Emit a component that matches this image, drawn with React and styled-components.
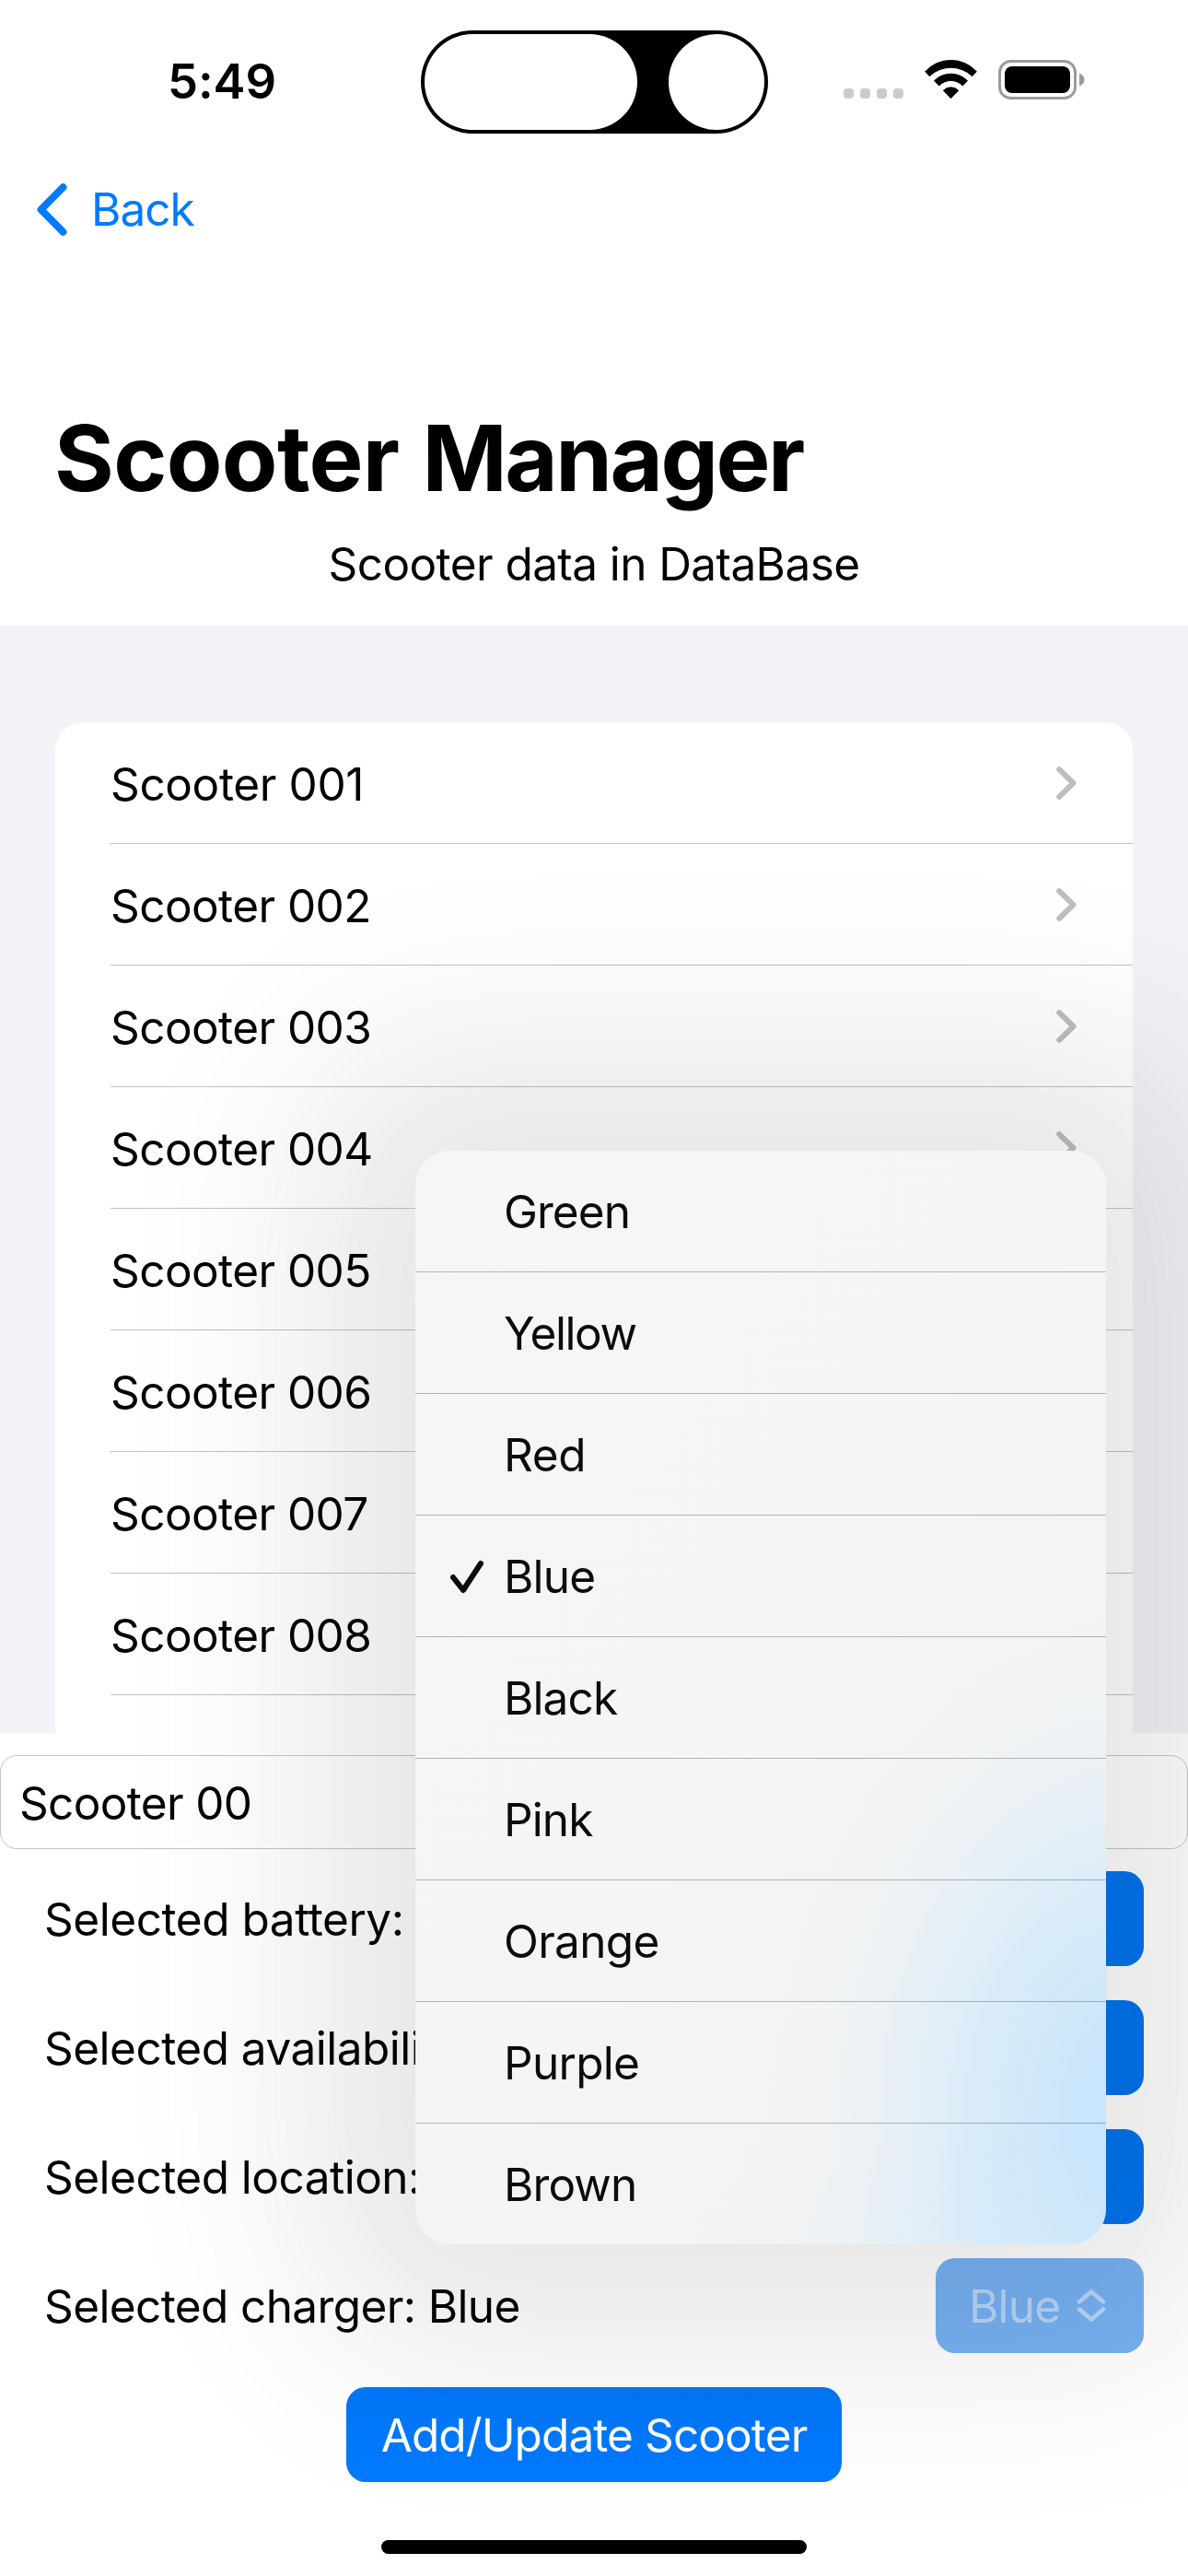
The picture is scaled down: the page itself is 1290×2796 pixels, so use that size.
import React from 'react';
import styled, { createGlobalStyle, css } from 'styled-components';

const GlobalStyle = createGlobalStyle`
  *, *::before, *::after { box-sizing: border-box; }
  body {
    margin: 0;
    background: #fff;
    color: #000;
    font-family: Inter, "Liberation Sans", sans-serif;
    -webkit-font-smoothing: antialiased;
  }
`;

const Screen = styled.div`
  position: relative;
  display: flex;
  flex-direction: column;
  width: 1290px;
  height: 2796px;
  overflow: hidden;
  background: #fff;
`;

const Label = styled.span`
  font-size: 49.5px;
  line-height: 60px;
  white-space: nowrap;
  letter-spacing: ${(p) => p.$track ?? -0.0117}em;
`;

/* ---------- status bar ---------- */

const StatusBar = styled.header`
  display: grid;
  grid-template-columns: 457px 377px 1fr;
  align-items: center;
  height: 178px;
`;

const Clock = styled.time`
  padding: 0 0 2px 182px;
  font-size: 52.5px;
  font-weight: 600;
  line-height: 64px;
  letter-spacing: -0.002em;
`;

const Island = styled.div`
  display: flex;
  justify-content: space-between;
  height: 112px;
  padding: 4px;
  border-radius: 56px;
  background: #000;
`;

const IslandPill = styled.span`
  width: ${(p) => p.$width}px;
  border-radius: 52px;
  background: #fff;
`;

const Indicators = styled.div`
  display: flex;
  align-items: flex-end;
  height: 43px;
  margin-top: -5px;
  padding-left: 82px;
`;

const Signal = styled.div`
  display: flex;
  gap: 7px;
  margin: 0 23px 1px 0;
`;

const Dot = styled.i`
  width: 11px;
  height: 11px;
  border-radius: 4px;
  background: #cbcbcb;
`;

const WifiSvg = styled.svg`
  width: 57px;
  height: 42.3px;
  margin: 0 23px 1px 0;
`;

const BatterySvg = styled.svg`
  width: 94px;
  height: 43px;
`;

const Wifi = () => (
  <WifiSvg viewBox="312 75 171 127">
    <g fill="#000" stroke="#000" strokeWidth="3" strokeLinejoin="round">
      <path d="M314 113A113 113 0 0 1 481 113L467 128A100 100 0 0 0 328 128Z" />
      <path d="M343.500 143A76 76 0 0 1 451.500 143L436 159A53 53 0 0 0 359 159Z" />
      <path d="M373 175A34 34 0 0 1 422 175L397.500 200Z" />
    </g>
  </WifiSvg>
);

const Battery = () => (
  <BatterySvg viewBox="0 0 94 43">
    <rect x="1.500" y="1.500" width="82" height="40" rx="12" fill="none" stroke="#9b9b9b" strokeWidth="3" />
    <rect x="7" y="7" width="71" height="29" rx="8" fill="#000" />
    <path d="M88 14.500C91.500 16 93.500 18.500 93.500 21.500S91.500 27 88 28.500Z" fill="#9b9b9b" />
  </BatterySvg>
);

/* ---------- navigation and heading ---------- */

const NavBar = styled.nav`
  display: flex;
  align-items: center;
  height: 98px;
  padding-left: 40px;
`;

const BackButton = styled.button`
  display: flex;
  align-items: center;
  gap: 26px;
  padding: 0;
  border: 0;
  background: none;
  color: #007aff;
  font: inherit;
`;

const BackChevron = styled.svg`
  width: 33px;
  height: 57px;
  fill: none;
  stroke: #007aff;
  stroke-width: 8;
  stroke-linecap: round;
  stroke-linejoin: round;
`;

const Heading = styled.div`
  display: flex;
  flex-direction: column;
  height: 403px;
  padding-top: 161px;
`;

const Title = styled.h1`
  margin: 0;
  padding-left: 59px;
  font-size: 99px;
  font-weight: 700;
  line-height: 120px;
  letter-spacing: -0.025em;
  word-spacing: 4px;
`;

const TitleLead = styled.span`
  letter-spacing: -0.0066em;
`;

const Subtitle = styled.p`
  margin: 25px 0 0;
  text-align: center;
  line-height: 60px;
`;

/* ---------- scooter list ---------- */

const ListArea = styled.section`
  height: 1202px;
  padding: 105px 60px 0;
  overflow: hidden;
  background: #f2f2f7;
`;

const Card = styled.ul`
  height: 1200px;
  margin: 0;
  padding: 0 0 0 60px;
  border-radius: 30px;
  background: #fff;
  list-style: none;
`;

const ScooterRow = styled.li`
  display: flex;
  align-items: center;
  justify-content: space-between;
  height: 132px;
  padding: 2px 61px 0 0;
  border-bottom: 1px solid #c2c2c4;
`;

const RowChevron = styled.svg`
  width: 22px;
  height: 36px;
  margin-top: -1px;
  fill: none;
  stroke: #bebebf;
  stroke-width: 6;
  stroke-linecap: round;
  stroke-linejoin: round;
`;

/* ---------- form ---------- */

const Form = styled.form`
  display: flex;
  flex-direction: column;
  align-items: center;
  padding-top: 24px;
`;

const NameField = styled.div`
  display: flex;
  align-items: center;
  width: 100%;
  height: 102px;
  margin-bottom: 24px;
  padding: 1px 20px 0;
  border: 1px solid #c4c4c4;
  border-radius: 18px;
`;

const PickerRow = styled.div`
  display: flex;
  align-items: center;
  justify-content: space-between;
  width: 100%;
  height: 103px;
  margin-bottom: 37px;
  padding: 0 48px 0 48px;
`;

const button = css`
  display: flex;
  align-items: center;
  height: 103px;
  border: 0;
  border-radius: 21px;
  font: inherit;
  color: #fff;
`;

const PickerButton = styled.button`
  ${button}
  gap: 18px;
  width: 226px;
  padding: 0 0 0 36px;
  background: #0074ee;
  ${(p) => p.$open && css`
    color: #b8d6f8;
    background: #77b1f3;
  `}
`;

const UpDown = styled.svg`
  width: 32px;
  height: 37px;
  fill: none;
  stroke: currentColor;
  stroke-width: 4.8;
  stroke-linecap: round;
  stroke-linejoin: round;
`;

const SubmitButton = styled.button`
  ${button}
  justify-content: center;
  width: 538px;
  padding: 0;
  background: linear-gradient(#0077f8, #007aff);
`;

const HomeIndicator = styled.div`
  width: 462px;
  height: 15px;
  margin: 63px auto 0;
  border-radius: 8px;
  background: #000;
`;

/* ---------- colour menu ---------- */

const Menu = styled.ul`
  position: absolute;
  top: 1249px;
  left: 451px;
  width: 750px;
  height: 1187px;
  margin: 0;
  padding: 0;
  overflow: hidden;
  border-radius: 38px;
  list-style: none;
  color: #0b0b0b;
  background:
    radial-gradient(ellipse 330px 190px at 690px 1230px, rgba(200, 229, 253, 0.35), rgba(200, 229, 253, 0) 100%),
    radial-gradient(
      ellipse 412px 560px at 780px 1045px,
      #c8e5fd 0%,
      #cbe6fb 18%,
      #d6eaf8 36%,
      #deedf8 49%,
      #e8f0f6 62%,
      #eff2f4 76%,
      rgba(243, 243, 243, 0) 100%
    ),
    linear-gradient(125deg, #f6f6f6, #f5f5f5 45%, #f3f3f3 75%);
`;

const MenuShadow = styled.div`
  position: absolute;
  top: 1249px;
  left: 451px;
  width: 750px;
  height: 1187px;
  border-radius: 38px;
  box-shadow: 0 0 218px 110px rgba(10, 10, 0, 0.103);
`;

const MenuItem = styled.li`
  display: grid;
  grid-template-columns: 96px 1fr;
  align-items: center;
  height: 132px;
  background: ${(p) =>
    p.$last
      ? 'none'
      : `linear-gradient(to right, #b3b3b4 60%, ${p.$tint}) bottom / 100% 1px no-repeat`};
`;

const CheckSlot = styled.span`
  display: flex;
  padding-left: 37px;
`;

const CheckSvg = styled.svg`
  width: 38px;
  height: 37px;
  fill: none;
  stroke: #0b0b0b;
  stroke-width: 6;
  stroke-linecap: round;
  stroke-linejoin: round;
`;

const Check = () => (
  <CheckSvg viewBox="0 0 38 37">
    <path d="M4 19L15 33L34 4" />
  </CheckSvg>
);

const scooters = ['001', '002', '003', '004', '005', '006', '007', '008'];

const pickers = [
  { label: 'Selected battery:', track: -0.0091 },
  { label: 'Selected availability:', track: -0.0105 },
  { label: 'Selected location:', track: -0.0105 },
  { label: 'Selected charger: Blue', track: -0.0124, value: 'Blue' },
];

const colours = [
  { name: 'Green', track: -0.019 },
  { name: 'Yellow', track: -0.028 },
  { name: 'Red', track: -0.007 },
  { name: 'Blue', track: -0.0158, checked: true },
  { name: 'Black', track: -0.018 },
  { name: 'Pink', track: -0.018, tint: '#8fb0cc' },
  { name: 'Orange', track: -0.014, tint: '#88b0d0' },
  { name: 'Purple', track: -0.014, tint: '#7fadd4' },
  { name: 'Brown', track: -0.018 },
];

export default function App() {
  return (
    <>
      <GlobalStyle />
      <Screen>
        <StatusBar>
          <Clock>5:49</Clock>
          <Island>
            <IslandPill $width={231} />
            <IslandPill $width={104} />
          </Island>
          <Indicators>
            <Signal>
              <Dot />
              <Dot />
              <Dot />
              <Dot />
            </Signal>
            <Wifi />
            <Battery />
          </Indicators>
        </StatusBar>

        <NavBar>
          <BackButton>
            <BackChevron viewBox="0 0 33 57">
              <path d="M28.500 4.300L4.500 28.500L28.500 52.700" />
            </BackChevron>
            <Label $track={-0.02}>Back</Label>
          </BackButton>
        </NavBar>

        <Heading>
          <Title>
            <TitleLead>Scooter</TitleLead> Manager
          </Title>
          <Subtitle>
            <Label>Scooter data in DataBase</Label>
          </Subtitle>
        </Heading>

        <ListArea>
          <Card>
            {scooters.map((id) => (
              <ScooterRow key={id}>
                <Label $track={id === '001' ? -0.0075 : undefined}>Scooter {id}</Label>
                <RowChevron viewBox="0 0 22 36">
                  <path d="M3.200 3.200L18.500 18L3.200 32.800" />
                </RowChevron>
              </ScooterRow>
            ))}
          </Card>
        </ListArea>

        <Form>
          <NameField>
            <Label $track={-0.0134}>Scooter 00</Label>
          </NameField>
          {pickers.map(({ label, track, value }) => (
            <PickerRow key={label}>
              <Label $track={track}>{label}</Label>
              <PickerButton type="button" $open={Boolean(value)}>
                {value && (
                  <>
                    <Label $track={-0.0158}>{value}</Label>
                    <UpDown viewBox="0 0 32 37">
                      <path d="M3 14.500L16 3.500L29 14.500M3 22.500L16 33.500L29 22.500" />
                    </UpDown>
                  </>
                )}
              </PickerButton>
            </PickerRow>
          ))}
          <SubmitButton type="button">
            <Label $track={-0.0182}>Add/Update Scooter</Label>
          </SubmitButton>
        </Form>
        <HomeIndicator />

        <MenuShadow />
        <Menu>
          {colours.map(({ name, track, checked, tint = '#b3b3b4' }, i) => (
            <MenuItem key={name} $tint={tint} $last={i === colours.length - 1}>
              <CheckSlot>{checked && <Check />}</CheckSlot>
              <Label $track={track}>{name}</Label>
            </MenuItem>
          ))}
        </Menu>
      </Screen>
    </>
  );
}
